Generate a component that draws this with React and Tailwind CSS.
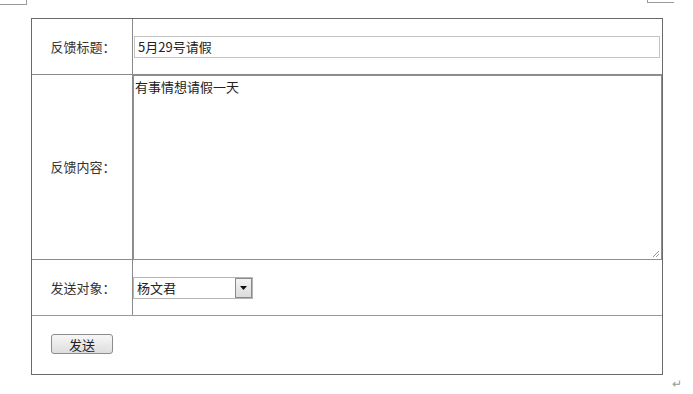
export default function App() {
  const font = { fontFamily: '"Noto Sans CJK SC", "Noto Sans CJK JP", sans-serif' };
  return (
    <div className="relative w-[693px] h-[394px] bg-white overflow-hidden text-[13px] text-[#333]" style={font}>
      {/* page corner marks */}
      <div className="absolute left-0 top-0 w-[27px] h-[5px] border-r border-b border-[#9a9a9a]" />
      <div className="absolute left-[647px] top-0 w-[27px] h-[3px] border-l border-b border-[#9a9a9a]" />

      <div className="pt-[18px] pl-[31px]">
        <div className="w-[632px] h-[357px] border border-[#6a6a6a] flex flex-col">
          <div className="flex h-[56px] border-b border-[#8a8a8a]">
            <div className="w-[101px] border-r border-[#8a8a8a] flex items-center justify-center pl-[2px]">反馈标题：</div>
            <div className="flex-1 flex items-center pl-[1px] pr-[2px]">
              <div className="w-full h-[22px] border border-[#c4c4c4] flex items-center pl-[3px] text-[#222]">5月29号请假</div>
            </div>
          </div>
          <div className="flex h-[185px] border-b border-[#8a8a8a]">
            <div className="w-[101px] border-r border-[#8a8a8a] flex items-center justify-center pl-[2px]">反馈内容：</div>
            <div className="flex-1 relative border border-[#8f8f8f] -mb-[1px] pl-[1px] pt-[1px] text-[#222] leading-[20px]">
              有事情想请假一天
              <svg className="absolute right-[1px] bottom-[1px]" width="9" height="9" viewBox="0 0 9 9">
                <line x1="2" y1="8" x2="8" y2="2" stroke="#9a9a9a" strokeWidth="1" />
                <line x1="5" y1="8" x2="8" y2="5" stroke="#9a9a9a" strokeWidth="1" />
              </svg>
            </div>
          </div>
          <div className="flex h-[56px] border-b border-[#9a9a9a]">
            <div className="w-[101px] border-r border-[#8a8a8a] flex items-center justify-center pl-[2px]">发送对象：</div>
            <div className="flex-1 flex items-center">
              <div className="w-[120px] h-[22px] border border-[#b5b5b5] flex items-center justify-between">
                <span className="pl-[3px] text-[#222]">杨文君</span>
                <div className="w-[17px] h-[20px] border border-[#8a8a8a] bg-gradient-to-b from-[#f4f4f4] to-[#dcdcdc] flex items-center justify-center">
                  <svg width="7" height="5" viewBox="0 0 7 5">
                    <polygon points="0,1 7,1 3.5,5" fill="#111" />
                  </svg>
                </div>
              </div>
            </div>
          </div>
          <div className="flex-1 pl-[19px] pt-[18px]">
            <button className="w-[62px] h-[20px] border border-[#8c8c8c] rounded-[3px] bg-gradient-to-b from-[#f7f7f7] to-[#dedede] text-[13px] text-[#222] leading-none flex items-center justify-center">
              发送
            </button>
          </div>
        </div>
      </div>

      <div className="absolute left-[672px] top-[374px] text-[12px] text-[#999]">↵</div>
    </div>
  );
}
